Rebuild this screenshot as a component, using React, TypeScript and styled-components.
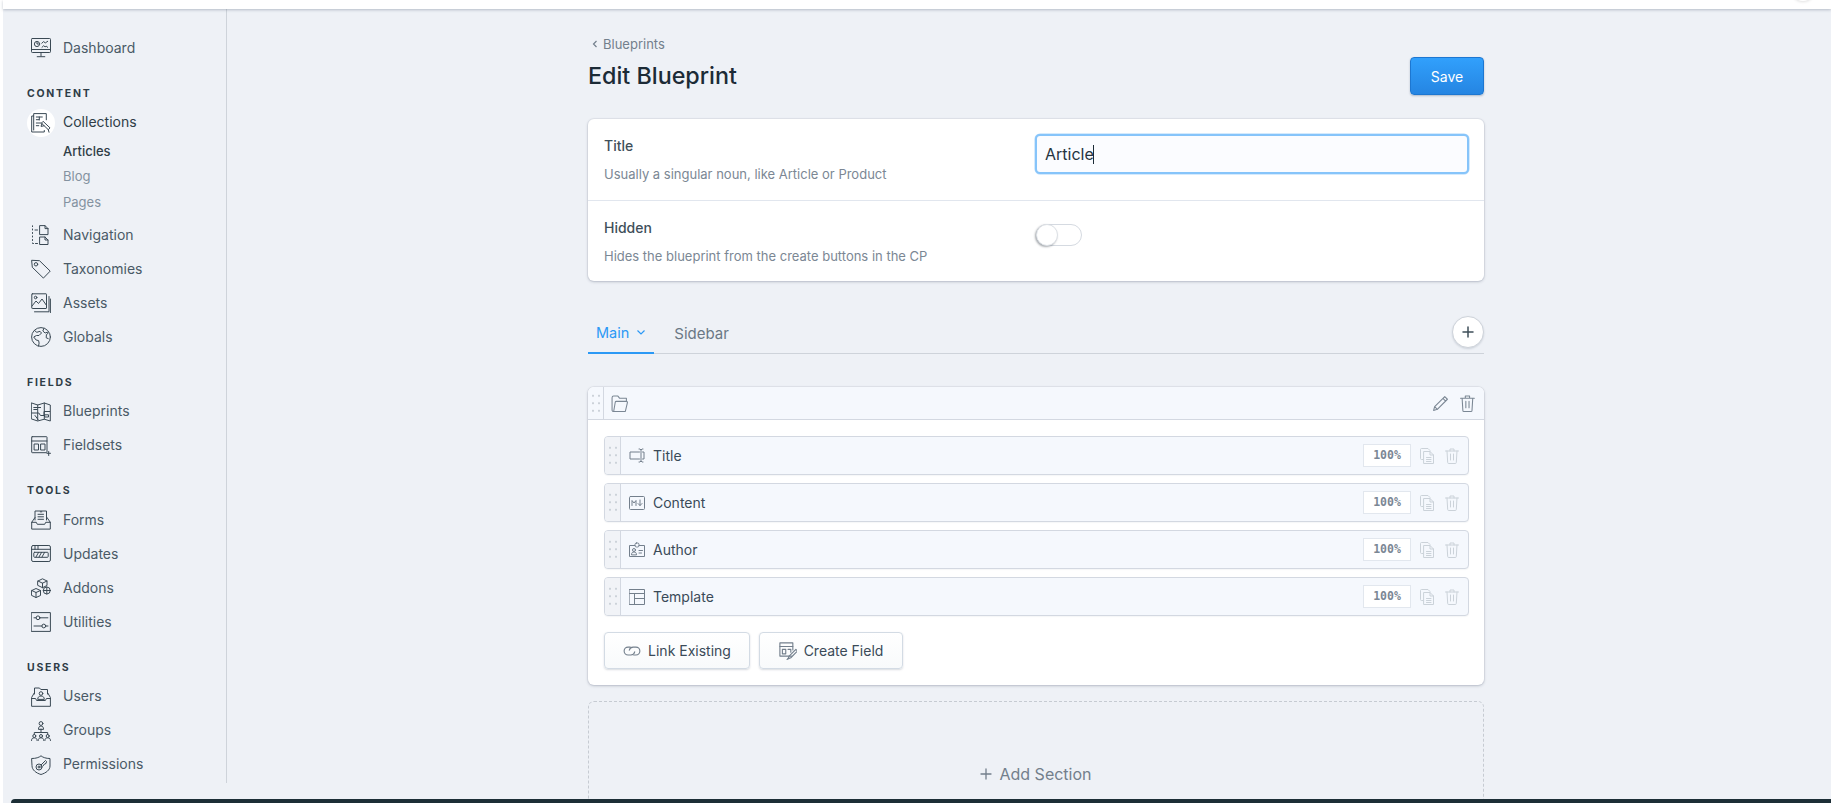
import React from 'react';
import styled, { createGlobalStyle } from 'styled-components';

const GlobalStyle = createGlobalStyle`
  html, body, #root {
    margin: 0;
    height: 100%;
    overflow: hidden;
  }
  body {
    background: #fff;
    font-family: 'Inter', 'Noto Sans', sans-serif;
    font-size: 14px;
    color: #3f4f5a;
  }
  * { box-sizing: border-box; }
`;

const Shell = styled.div`
  height: 100vh;
  padding-left: 3px;
  display: flex;
  flex-direction: column;
  background: #fff;
`;

const TopBar = styled.header`
  position: relative;
  height: 9px;
  flex-shrink: 0;
  background: #fff;
  box-shadow: 0 1px 3px rgba(70, 85, 110, 0.35);
  z-index: 2;
  overflow: hidden;
`;

const AvatarEdge = styled.div`
  position: absolute;
  right: 16px;
  top: -23px;
  width: 24px;
  height: 24px;
  border-radius: 50%;
  box-shadow: 0 1px 3px rgba(0, 0, 0, 0.12);
`;

const Body = styled.div`
  flex: 1;
  min-height: 0;
  display: flex;
  background: #eef1f6;
`;

const Sidebar = styled.nav`
  width: 224px;
  height: 774px;
  flex-shrink: 0;
  padding: 22px 0 0 24px;
  border-right: 1px solid #ced3da;
`;

const SectionLabel = styled.div`
  margin: 20.5px 0 4px;
  font-size: 10.5px;
  line-height: 16px;
  font-weight: 700;
  letter-spacing: 1.75px;
  color: #2f3d47;
`;

const NavRow = styled.div<{ $active?: boolean }>`
  display: flex;
  align-items: center;
  height: 34px;
  gap: 8px;
  color: ${(p) => (p.$active ? '#2f3d47' : '#4a5a66')};
  font-size: 14px;
`;

const NavText = styled.span`
  margin-top: -2px;
`;

const IconSlot = styled.span<{ $active?: boolean }>`
  width: 28px;
  height: 28px;
  flex-shrink: 0;
  display: flex;
  align-items: center;
  justify-content: center;
  border-radius: 50%;
  color: #3a4954;
  background: ${(p) => (p.$active ? '#fff' : 'transparent')};
`;

const SubList = styled.div`
  margin: -1px 0 3px 36px;
`;

const SubItem = styled.div<{ $active?: boolean }>`
  height: 25.5px;
  line-height: 25.5px;
  font-size: 13px;
  color: ${(p) => (p.$active ? '#2f3d47' : '#8492a0')};
  font-weight: ${(p) => (p.$active ? 500 : 400)};
`;

const Main = styled.main`
  flex: 1;
  min-width: 0;
  display: flex;
  justify-content: center;
  padding-left: 14px;
`;

const Column = styled.div`
  width: 896px;
  flex-shrink: 0;
`;

const Breadcrumb = styled.div`
  display: flex;
  align-items: center;
  gap: 5px;
  height: 20px;
  margin: 25px 0 0 4px;
  font-size: 13px;
  color: #737f8c;
`;

const HeaderRow = styled.div`
  display: flex;
  justify-content: space-between;
  align-items: center;
  height: 38px;
  margin: 3px 0 24px;
`;

const PageTitle = styled.h1`
  margin: -1px 0 0;
  font-size: 23.3px;
  font-weight: 500;
  color: #1c2b36;
`;

const SaveButton = styled.button`
  width: 74px;
  height: 38px;
  border: 1px solid #1d77d1;
  border-radius: 4px;
  background: linear-gradient(180deg, #31a0fc, #2585e2);
  box-shadow: 0 1px 2px rgba(30, 60, 100, 0.3);
  color: #fff;
  font: 400 14px 'Inter', sans-serif;
`;

const Card = styled.section`
  background: #fff;
  border-radius: 6px;
  box-shadow: 0 0 0 1px rgba(60, 75, 100, 0.06), 0 1px 3px rgba(60, 75, 100, 0.28);
`;

const SettingRow = styled.div`
  display: flex;
  height: 81px;
  padding: 15px 15px 0 16px;
  & + & {
    border-top: 1px solid #e1e6ee;
  }
`;

const SettingText = styled.div`
  width: 431px;
  flex-shrink: 0;
`;

const SettingLabel = styled.div`
  height: 24px;
  line-height: 24px;
  font-size: 14px;
  font-weight: 500;
  color: #3f4f5a;
`;

const SettingHelp = styled.div`
  margin-top: 7px;
  font-size: 13px;
  line-height: 18px;
  color: #7b8794;
`;

const TitleInput = styled.div`
  width: 435px;
  height: 40px;
  display: flex;
  align-items: center;
  padding-left: 8px;
  border: 2px solid #86c4fa;
  border-radius: 5px;
  background: #fbfcff;
  box-shadow: 0 0 0 0.5px #a9d5fb;
  font-size: 16px;
  color: #25343f;
`;

const Caret = styled.span`
  width: 1px;
  height: 19px;
  margin-left: -1px;
  background: #1c2b36;
`;

const Toggle = styled.div`
  position: relative;
  width: 46px;
  height: 22px;
  margin: 8px 0 0 1px;
  border: 1px solid #d5dae1;
  border-radius: 11px;
  background: #fff;
`;

const ToggleKnob = styled.span`
  position: absolute;
  left: -1px;
  top: -1px;
  width: 22px;
  height: 22px;
  border-radius: 50%;
  background: #fff;
  border: 1px solid #dde1e6;
  box-shadow: -1px 1px 2px rgba(40, 50, 60, 0.4);
`;

const Tabs = styled.div`
  display: flex;
  align-items: flex-end;
  height: 36px;
  margin-top: 37px;
  border-bottom: 1px solid #ced3da;
`;

const Tab = styled.div<{ $active?: boolean }>`
  display: flex;
  align-items: center;
  gap: 7px;
  height: 36px;
  margin-bottom: -1px;
  padding: 0 8px 5px;
  margin-right: 12px;
  font-size: ${(p) => (p.$active ? 14.5 : 15)}px;
  color: ${(p) => (p.$active ? '#2b99f5' : '#6b7885')};
  border-bottom: ${(p) => (p.$active ? '2px solid #2b99f5' : '1px solid transparent')};
`;

const AddTabButton = styled.button`
  width: 32px;
  height: 32px;
  margin: 0 0 5px auto;
  display: flex;
  align-items: center;
  justify-content: center;
  padding: 0;
  border: 1px solid #ced3da;
  border-radius: 50%;
  background: #fff;
  color: #3f4f5a;
  box-shadow: 0 1px 2px rgba(60, 75, 100, 0.18);
`;

const SectionCard = styled(Card)`
  margin-top: 33px;
  height: 298px;
`;

const SectionHeader = styled.div`
  display: flex;
  align-items: center;
  height: 33px;
  padding-right: 7px;
  background: #f5f8fd;
  border-bottom: 1px solid #d3d8e1;
  border-radius: 6px 6px 0 0;
  color: #7b8794;
`;

const DragHandle = styled.div<{ $inset?: boolean }>`
  width: 16px;
  align-self: stretch;
  flex-shrink: 0;
  display: flex;
  align-items: center;
  justify-content: center;
  border-right: 1px solid #d3d8e1;
  background-color: ${(p) => (p.$inset ? '#f1f3f7' : 'transparent')};
`;

const DragDots = styled.span`
  width: 12px;
  height: 22.5px;
  background-image: radial-gradient(circle, #ccd2d9 1.2px, transparent 1.5px);
  background-size: 6px 7.5px;
`;

const FolderSlot = styled.span`
  display: flex;
  margin-left: 7px;
  flex: 1;
`;

const HeaderActions = styled.div`
  display: flex;
  align-items: center;
  gap: 11px;
`;

const FieldList = styled.div`
  display: flex;
  flex-direction: column;
  gap: 8px;
  padding: 16px 15px 0 16px;
`;

const FieldRow = styled.div`
  display: flex;
  align-items: center;
  height: 39px;
  background: #f5f8fd;
  border: 1px solid #d3d8e1;
  border-radius: 4px;
  overflow: hidden;
  padding-right: 7px;
  box-shadow: 0 1px 1px rgba(60, 75, 100, 0.05);
`;

const FieldIcon = styled.span`
  display: flex;
  margin-left: 8px;
  color: #737f8c;
`;

const FieldName = styled.span`
  flex: 1;
  margin-left: 8px;
  font-size: 14px;
  color: #3a4a58;
`;

const WidthBadge = styled.span`
  width: 48px;
  height: 23px;
  text-align: center;
  background: #fff;
  border: 1px solid #e2e7ee;
  font: 700 11.5px/21px 'DejaVu Sans Mono', monospace;
  color: #7b8794;
`;

const FieldActions = styled.div`
  display: flex;
  align-items: center;
  gap: 9px;
  margin-left: 9px;
  color: #cbd2d9;
`;

const ButtonRow = styled.div`
  display: flex;
  gap: 9px;
  padding: 16px 0 0 16px;
`;

const FieldButton = styled.button<{ $width: number }>`
  width: ${(p) => p.$width}px;
  height: 37px;
  display: flex;
  align-items: center;
  justify-content: center;
  gap: 7px;
  padding: 0;
  border: 1px solid #d3dbe4;
  border-radius: 4px;
  background: linear-gradient(180deg, #fff, #f8fafb);
  box-shadow: 0 1px 2px rgba(60, 75, 100, 0.2);
  color: #3a4a58;
  font: 400 14px 'Inter', sans-serif;
  svg { color: #737f8c; }
`;

const AddSection = styled.div`
  height: 200px;
  margin-top: 16px;
  padding-top: 61px;
  display: flex;
  justify-content: center;
  align-items: flex-start;
  gap: 7px;
  border: 1px dashed #c6cbd2;
  border-radius: 6px;
  font-size: 16px;
  line-height: 22px;
  color: #737f8c;
`;

const AddSectionPlus = styled.span`
  display: flex;
  height: 22px;
  align-items: center;
`;

const BottomBar = styled.div`
  position: fixed;
  left: 11px;
  right: 0;
  bottom: 0;
  height: 4px;
  background: #1c2e36;
  border-radius: 4px 0 0 0;
  z-index: 3;
`;

const Svg = styled.svg`
  flex-shrink: 0;
  fill: none;
  stroke: currentColor;
  stroke-linecap: round;
  stroke-linejoin: round;
`;

const icons: Record<string, React.ReactNode> = {
  dashboard: (
    <>
      <rect x="0.5" y="0.5" width="19" height="14" rx="0.8" />
      <path d="M.5 11.5h19M10 14.5v3.5M6.2 18.7h7.6" />
      <circle cx="6" cy="6" r="2.6" />
      <path d="M6 4.5V6h1.3M10.8 5.2l1.8-1.6 1.7 1.3 2.4-1.6M11 9.3l1.7-1.6 1.4 1.2 1-.8 1.6 1.2" />
    </>
  ),
  collections: (
    <>
      <path d="M2.5 3H.7v16h12.6v-1.5" />
      <path d="M2.7 17V.6h12.6v6.2" />
      <path d="M5.3 4h6M5.3 6.7h2.6M8.3 4v3M5.3 10h4.5M5.3 12.7h2.5" />
      <path d="M12.4 8.6l6.6 6.3-1.7 1.8-6.6-6.3zM11 10.4l-1 3 3-.6M17.3 16.7l.7 2.5" />
    </>
  ),
  navigation: (
    <>
      <path d="M1.5.8v.8M1.5 4v1M1.5 7.5v1M1.5 11v1M1.5 14.5v1M1.5 18v.5h1M4 5h2.5M4.5 18.5h2" />
      <path d="M9 .6h5l3 3v6H9zM14 .6v3h3" />
      <path d="M9 12h5l3 3v4.5H9zM14 12v3h3" />
    </>
  ),
  taxonomies: (
    <>
      <path d="M1 1.3l7.5.4 10.7 10.4-6.8 7-10.8-10.5z" />
      <circle cx="5" cy="5.3" r="1.7" />
    </>
  ),
  assets: (
    <>
      <rect x="0.8" y="0.8" width="14.7" height="14.7" rx="0.5" />
      <path d="M1 13l4-5 2.5 2.5L11 6l4.2 6" />
      <circle cx="4.6" cy="4.5" r="1.3" />
      <path d="M18 3.5v15.3H3.5M19.4 6v13.6" />
    </>
  ),
  globals: (
    <>
      <circle cx="10" cy="10" r="9.4" />
      <path d="M3.5 3.5l2.3 1.8 3.2-1 1.5 1.7-2.5 2.5H5.5L2.7 10l2.4 3 2.5.6.5 2.5-.6 3M13 1.3l-1.2 2.7 2.3 2 2.4-.8.7 1-1.8 1.4-.2 3.2 2 .8" />
    </>
  ),
  blueprints: (
    <>
      <path d="M.7 1l6 2 6.6-2 6 2v16l-6-1.8-6.6 1.8-6-2z" />
      <path d="M6.7 3v15.2M13.3 1v16.2M2.8 5.5h6.8M2.8 7.5h3.5M.8 11h7l1.7 2.5h3.5v-4h5.7M4 13.5l3 4M14 15h3.5v-2.2H14z" />
    </>
  ),
  fieldsets: (
    <>
      <rect x="0.7" y="0.7" width="15.3" height="16" rx="0.5" />
      <path d="M.7 5h15.3M3.5 8h4v6h-4zM10 8h4v6h-4z" />
      <path d="M17.7 15.5v4M16 17.3h3.5" />
    </>
  ),
  forms: (
    <>
      <path d="M4 10V1h11.5v9" />
      <path d="M7 4.3h5.5M7 6.8h5.5M7 9.3h5.5M9.3 1.8h1.5" />
      <path d="M4 7.5L.7 12.3h4.6l1 2h7.4l1-2h4.6L16 7.5M.7 12.3v6.8h18.6v-6.8" />
    </>
  ),
  updates: (
    <>
      <rect x="0.6" y="1.5" width="18.8" height="16" rx="1.5" />
      <path d="M.6 5.3h18.8M4 1.5v3.8M7 1.5v3.8" />
      <rect x="2.8" y="8.3" width="14.4" height="5" rx="0.8" />
      <path d="M5 13l2.5-4.5M8 13l2.5-4.5M11 13l2.5-4.5" />
    </>
  ),
  addons: (
    <>
      <path d="M7 3l4.5-2.2L16 3v4.5l-4.5 2.2L7 7.5zM7 3l4.5 2.2L16 3M11.5 5.2v4.5" />
      <path d="M.8 12.5L5 10.5l4.5 2v5L5 19.5.8 17.5zM.8 12.5L5 14.5l4.5-2M5 14.5v5" />
      <circle cx="15.8" cy="12.5" r="3.5" />
      <path d="M15.8 9v7M12.3 12.5h7" />
    </>
  ),
  utilities: (
    <>
      <rect x="0.6" y="0.6" width="18.8" height="18.8" />
      <circle cx="7" cy="5.8" r="1.9" />
      <circle cx="12.8" cy="14" r="1.9" />
      <path d="M3 5.8h2.1M8.9 5.8h8M3 14h7.9M14.7 14h2.3" />
    </>
  ),
  users: (
    <>
      <path d="M3.5 7V1h5l1.3 1.5h6.7V7" />
      <path d="M3.5 5.5L.6 10.5v8.8h18.8v-8.8l-2.9-5" />
      <path d="M.6 11.5h4l1 2h8.8l1-2h4" />
      <circle cx="10" cy="6.5" r="1.8" />
      <path d="M6.7 12c0-2 1.5-3 3.3-3s3.3 1 3.3 3z" />
    </>
  ),
  groups: (
    <>
      <circle cx="10" cy="2.5" r="1.9" />
      <path d="M7.5 8c0-2 1-3 2.5-3s2.5 1 2.5 3zM10 8v3M3.3 13.5v-2h13.4v2" />
      <circle cx="3.3" cy="15" r="1.5" />
      <circle cx="10" cy="15" r="1.5" />
      <circle cx="16.7" cy="15" r="1.5" />
      <path d="M.5 19.5c0-1.8 1-2.7 2.8-2.7s2.8.9 2.8 2.7M7.2 19.5c0-1.8 1-2.7 2.8-2.7s2.8.9 2.8 2.7M13.9 19.5c0-1.8 1-2.7 2.8-2.7s2.8.9 2.8 2.7" />
    </>
  ),
  permissions: (
    <>
      <path d="M1 3.5C5 3.5 8 2.5 10 .8c2 1.7 5 2.7 9 2.7v7.5c0 4-4 7-9 8.5-5-1.5-9-4.5-9-8.5z" />
      <circle cx="8" cy="12" r="3" />
      <circle cx="8" cy="12" r="1" />
      <path d="M10 10l4.5-4.5 1 1-.5 2-1.5.5-1.5 2" />
    </>
  ),
  folder: (
    <>
      <path d="M2.5 15.5A1.5 1.5 0 0 1 1 14V2.5A1.5 1.5 0 0 1 2.5 1h4L8 3h6.500v3" />
      <path d="M2.5 15.500h11l2-8.500a1 1 0 0 0-1-1H5a1 1 0 0 0-1 .8z" />
    </>
  ),
  text: (
    <>
      <path d="M10.5 4H1v7h9.5M13.5 4H15v7h-1.5" />
      <path d="M10 1h1l1 1 1-1h1M12 2v11M10 14h1l1-1 1 1h1" />
    </>
  ),
  markdown: (
    <>
      <rect x="0.5" y="1.5" width="15" height="13" rx="1" />
      <path d="M3 10.5v-5l2 2.5 2-2.5v5M11 5v5.500M9 8.500l2 2 2-2" />
    </>
  ),
  author: (
    <>
      <path d="M6 3.5H.5v11h15v-11H10" />
      <rect x="6" y="1" width="4" height="4" rx="1.5" />
      <circle cx="5" cy="8" r="1.5" />
      <path d="M2.5 12.5c0-1.8 1-2.5 2.5-2.5s2.5.7 2.5 2.5zM10 8.5h3.5M10 11h2.5" />
    </>
  ),
  template: (
    <>
      <rect x="0.5" y="0.5" width="15" height="15" />
      <path d="M.5 4.5h15M5.5 4.5v11M5.5 9.5h10" />
    </>
  ),
  link: (
    <>
      <path d="M6.5 4.5h-2a3.5 3.5 0 0 0 0 7H7a3.500 3.500 0 0 0 3.400-2.700" />
      <path d="M9.5 11.5h2a3.5 3.5 0 0 0 0-7H9a3.500 3.500 0 0 0-3.400 2.700" />
    </>
  ),
  createField: (
    <>
      <path d="M11 12.5H.8V.8h11.5V7" />
      <path d="M.8 4h11.5M3 6.5h3v4H3zM8 6.5h2.5V9" />
      <path d="M15 6.5L16.500 8l-6 6-2.500 1 1-2.500zM8 14.500l-1 1.500" />
    </>
  ),
  copy: (
    <>
      <path d="M3 11.5H1.500a1 1 0 0 1-1-1v-9a1 1 0 0 1 1-1H8l2 2" />
      <path d="M4 3.5h6L13.500 7v8.500H4zM10 3.500V7h3.500M6.500 9.500H11M6.500 11.500H11M6.500 13.500H11" />
    </>
  ),
  trash: <path d="M.5 3h13M5 3V1h4v2M2 3l.7 11.500a1 1 0 0 0 1 1h6.600a1 1 0 0 0 1-1L12 3M5.500 6v6M8.500 6v6" />,
  pencil: <path d="M12 1.500L14.500 4 5 13.500l-3.500 1 1-3.500zM10.300 3.200l2.500 2.500M2.500 11L5 13.500" />,
  plus: <path d="M6 1v10M1 6h10" />,
};

const viewBoxes: Record<string, string> = {
  plus: '0 0 12 12',
};

type IconProps = { name: string; size?: number; strokeWidth?: number };

const Icon = ({ name, size = 16, strokeWidth = 1 }: IconProps) => {
  const box = viewBoxes[name] ?? (size >= 20 ? '0 0 20 20' : '0 0 16 16');
  return (
    <Svg width={size} height={size} viewBox={box} strokeWidth={strokeWidth}>
      {icons[name]}
    </Svg>
  );
};

type NavItem = { label: string; icon: string; active?: boolean; children?: { label: string; active?: boolean }[] };
type NavGroup = { title?: string; items: NavItem[] };

const navGroups: NavGroup[] = [
  { items: [{ label: 'Dashboard', icon: 'dashboard' }] },
  {
    title: 'CONTENT',
    items: [
      {
        label: 'Collections',
        icon: 'collections',
        active: true,
        children: [{ label: 'Articles', active: true }, { label: 'Blog' }, { label: 'Pages' }],
      },
      { label: 'Navigation', icon: 'navigation' },
      { label: 'Taxonomies', icon: 'taxonomies' },
      { label: 'Assets', icon: 'assets' },
      { label: 'Globals', icon: 'globals' },
    ],
  },
  {
    title: 'FIELDS',
    items: [
      { label: 'Blueprints', icon: 'blueprints' },
      { label: 'Fieldsets', icon: 'fieldsets' },
    ],
  },
  {
    title: 'TOOLS',
    items: [
      { label: 'Forms', icon: 'forms' },
      { label: 'Updates', icon: 'updates' },
      { label: 'Addons', icon: 'addons' },
      { label: 'Utilities', icon: 'utilities' },
    ],
  },
  {
    title: 'USERS',
    items: [
      { label: 'Users', icon: 'users' },
      { label: 'Groups', icon: 'groups' },
      { label: 'Permissions', icon: 'permissions' },
    ],
  },
];

const fields = [
  { name: 'Title', icon: 'text' },
  { name: 'Content', icon: 'markdown' },
  { name: 'Author', icon: 'author' },
  { name: 'Template', icon: 'template' },
];

const App: React.FC = () => (
  <Shell>
    <GlobalStyle />
    <TopBar>
      <AvatarEdge />
    </TopBar>
    <Body>
      <Sidebar>
        {navGroups.map((group, i) => (
          <div key={i}>
            {group.title && <SectionLabel>{group.title}</SectionLabel>}
            {group.items.map((item) => (
              <React.Fragment key={item.label}>
                <NavRow $active={item.active}>
                  <IconSlot $active={item.active}>
                    <Icon name={item.icon} size={20} />
                  </IconSlot>
                  <NavText>{item.label}</NavText>
                </NavRow>
                {item.children && (
                  <SubList>
                    {item.children.map((child) => (
                      <SubItem key={child.label} $active={child.active}>
                        {child.label}
                      </SubItem>
                    ))}
                  </SubList>
                )}
              </React.Fragment>
            ))}
          </div>
        ))}
      </Sidebar>
      <Main>
        <Column>
          <Breadcrumb>
            <svg width="6" height="8" viewBox="0 0 6 8" fill="none" stroke="currentColor" strokeWidth="1.2">
              <path d="M4.5 1l-3 3 3 3" />
            </svg>
            Blueprints
          </Breadcrumb>
          <HeaderRow>
            <PageTitle>Edit Blueprint</PageTitle>
            <SaveButton>Save</SaveButton>
          </HeaderRow>
          <Card>
            <SettingRow>
              <SettingText>
                <SettingLabel>Title</SettingLabel>
                <SettingHelp>Usually a singular noun, like Article or Product</SettingHelp>
              </SettingText>
              <TitleInput>
                Article
                <Caret />
              </TitleInput>
            </SettingRow>
            <SettingRow>
              <SettingText>
                <SettingLabel>Hidden</SettingLabel>
                <SettingHelp>Hides the blueprint from the create buttons in the CP</SettingHelp>
              </SettingText>
              <Toggle>
                <ToggleKnob />
              </Toggle>
            </SettingRow>
          </Card>
          <Tabs>
            <Tab $active>
              Main
              <svg width="10" height="7" viewBox="0 0 10 7" fill="none" stroke="currentColor" strokeWidth="1.2">
                <path d="M1.5 1.5L5 5l3.5-3.5" />
              </svg>
            </Tab>
            <Tab>Sidebar</Tab>
            <AddTabButton>
              <Icon name="plus" size={12} strokeWidth={1.5} />
            </AddTabButton>
          </Tabs>
          <SectionCard>
            <SectionHeader>
              <DragHandle>
                <DragDots />
              </DragHandle>
              <FolderSlot>
                <Icon name="folder" size={17} />
              </FolderSlot>
              <HeaderActions>
                <Icon name="pencil" size={17} />
                <Icon name="trash" size={17} />
              </HeaderActions>
            </SectionHeader>
            <FieldList>
              {fields.map((field) => (
                <FieldRow key={field.name}>
                  <DragHandle $inset>
                    <DragDots />
                  </DragHandle>
                  <FieldIcon>
                    <Icon name={field.icon} />
                  </FieldIcon>
                  <FieldName>{field.name}</FieldName>
                  <WidthBadge>100%</WidthBadge>
                  <FieldActions>
                    <Icon name="copy" />
                    <Icon name="trash" />
                  </FieldActions>
                </FieldRow>
              ))}
            </FieldList>
            <ButtonRow>
              <FieldButton $width={146}>
                <Icon name="link" size={18} />
                Link Existing
              </FieldButton>
              <FieldButton $width={144}>
                <Icon name="createField" size={18} />
                Create Field
              </FieldButton>
            </ButtonRow>
          </SectionCard>
          <AddSection>
            <AddSectionPlus>
              <Icon name="plus" size={12} strokeWidth={1.3} />
            </AddSectionPlus>
            Add Section
          </AddSection>
        </Column>
      </Main>
    </Body>
    <BottomBar />
  </Shell>
);

export default App;
